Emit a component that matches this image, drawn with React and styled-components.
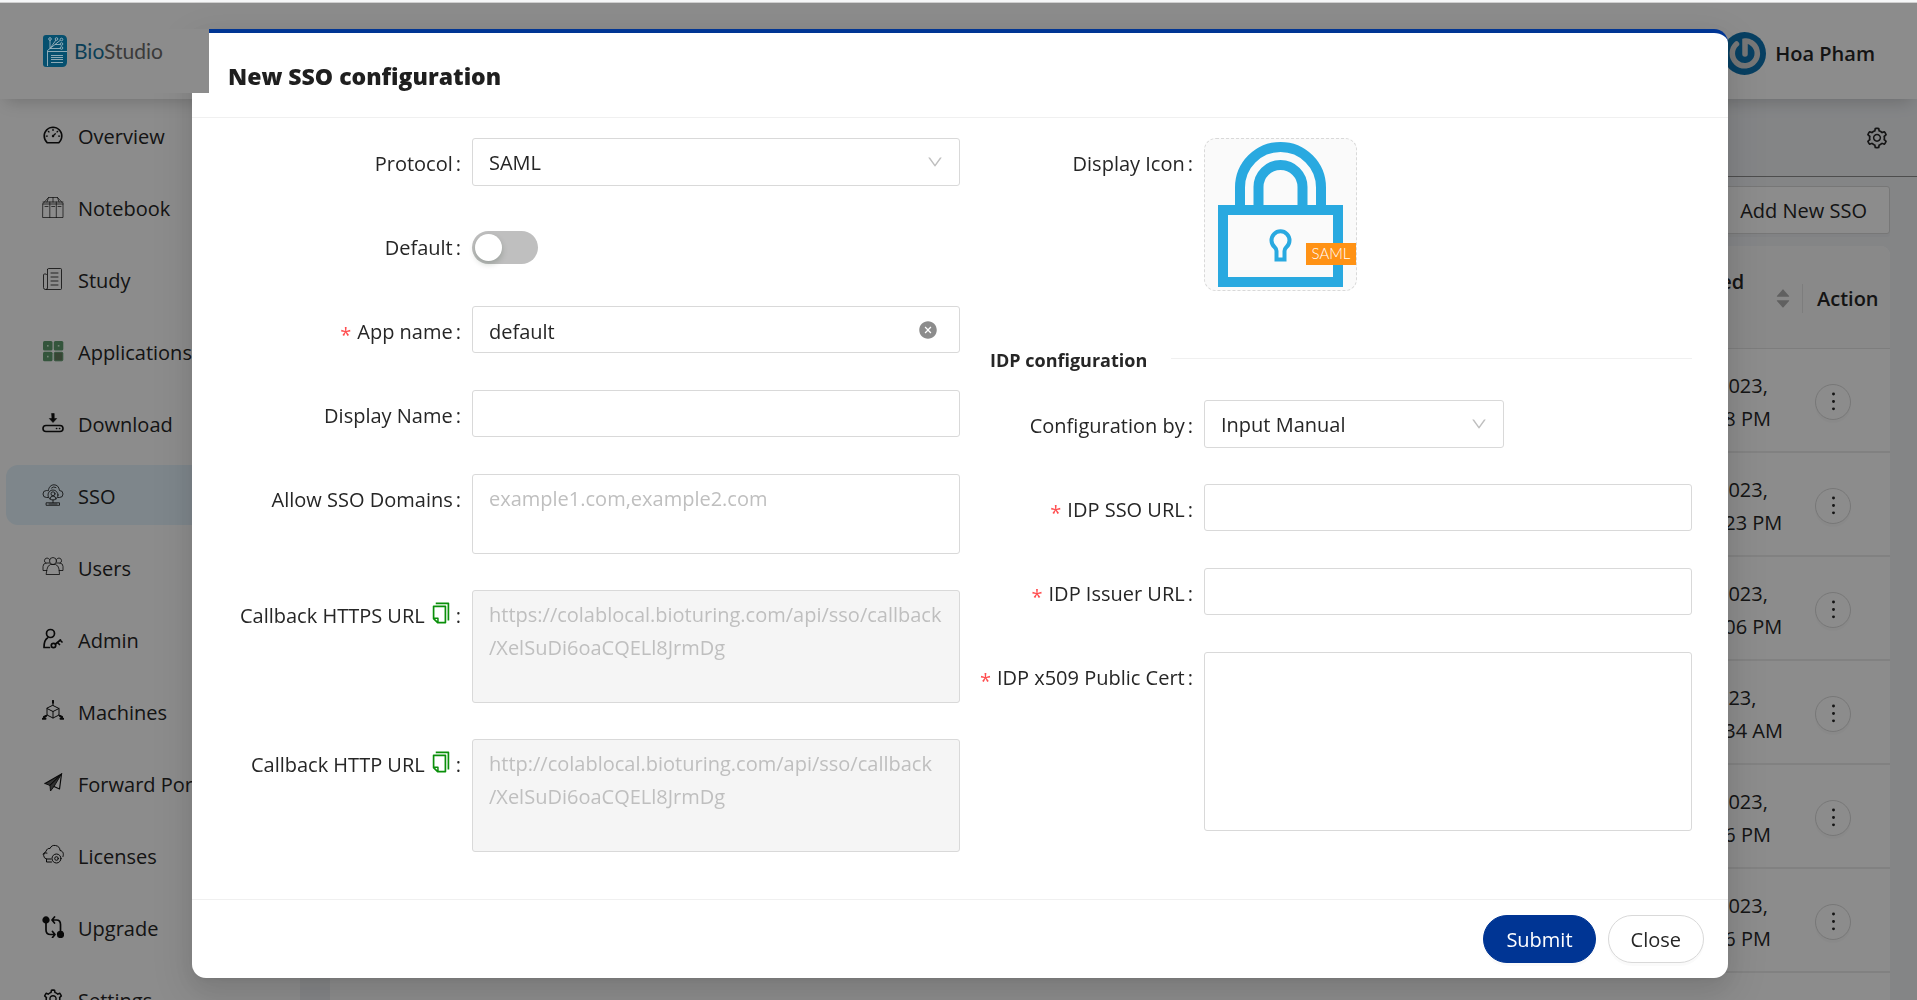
import React, { useState } from 'react'
import styled, { createGlobalStyle, css } from 'styled-components'
import {
  AiFillCaretDown,
  AiFillCaretUp,
  AiFillCloseCircle,
  AiOutlineCopy,
  AiOutlineDashboard,
  AiOutlineDown,
  AiOutlineMore,
  AiOutlineSetting,
} from 'react-icons/ai'

const colors = {
  primary: '#003594',
  text: '#262626',
  border: '#d9d9d9',
  line: '#f0f0f0',
  muted: '#bfbfbf',
  danger: '#ff4d4f',
  sky: '#29a9e0',
  dimmed: '#8c8c8c',
}

const GlobalStyle = createGlobalStyle`
  * { box-sizing: border-box; }
  body {
    margin: 0;
    overflow: hidden;
    color: ${colors.text};
    font-family: "Open Sans", "Noto Sans", sans-serif;
    font-size: 20px;
    line-height: 33px;
  }
  button, input, select, textarea {
    font: inherit;
    color: inherit;
  }
`

/* ---------- page behind the dialog ---------- */

const Page = styled.div`
  display: flex;
  flex-direction: column;
  height: 100vh;
  overflow: hidden;
  border-top: 2px solid #f6f7f8;
  background: #fff;
`

const Header = styled.header`
  position: relative;
  display: flex;
  flex: none;
  justify-content: space-between;
  align-items: center;
  height: 97px;
  padding-right: 42px;
  border-top: 1px solid #d0d0d0;
  background: #fff;
  box-shadow: 0 8px 16px -6px rgba(0, 0, 0, 0.2);
`

// stays above the dialog, so it carries its own dimmed background
const Brand = styled.a`
  position: relative;
  z-index: 20;
  display: flex;
  align-items: center;
  gap: 7px;
  width: 209px;
  height: 64px;
  margin-top: 20px;
  padding: 0 0 20px 43px;
  background: ${colors.dimmed};
  color: #3a3a3a;
  font-family: Lato, sans-serif;
  font-size: 21px;
  line-height: 24px;
  text-decoration: none;
  span { color: #0b3f57; }
`

const User = styled.div`
  display: flex;
  align-items: center;
  gap: 9px;
  margin-bottom: -9px;
  height: 60px;
  padding-bottom: 4px;
  font-weight: 600;
`

const Main = styled.div`
  display: flex;
  flex: 1;
  min-height: 0;
`

const Sidebar = styled.nav`
  display: flex;
  flex: none;
  flex-direction: column;
  gap: 12px;
  width: 300px;
  padding: 6px;
`

const NavLink = styled.a`
  display: flex;
  flex: none;
  align-items: center;
  gap: 14px;
  height: 60px;
  padding: 2px 0 0 36px;
  border-radius: 12px;
  color: ${colors.text};
  text-decoration: none;
  white-space: nowrap;
  background: ${(props) => (props.$active ? '#e5f4fd' : 'transparent')};
  svg {
    flex: none;
    width: 22px;
    height: 22px;
    color: #111;
    margin-bottom: 2px;
  }
`

const Content = styled.main`
  flex: 1;
  min-width: 0;
  background: #f0f2f5;
`

const ContentBar = styled.div`
  display: flex;
  align-items: center;
  justify-content: flex-end;
  height: 78px;
  padding: 0 28px;
  border-bottom: 1px solid #8c8c8c;
`

const IconButton = styled.button`
  display: flex;
  padding: 0;
  border: 0;
  background: none;
  cursor: pointer;
`

const ContentBody = styled.div`
  padding: 9px 27px 0 30px;
`

const Actions = styled.div`
  display: flex;
  justify-content: flex-end;
  margin-bottom: 12px;
`

const Button = styled.button`
  height: 48px;
  padding: 0 22px;
  border: 1px solid ${colors.border};
  border-radius: ${(props) => (props.$round ? '24px' : '3px')};
  background: #fff;
  box-shadow: 0 3px 0 rgba(0, 0, 0, 0.02);
  cursor: pointer;
  ${(props) => props.$primary && css`
    border-color: ${colors.primary};
    background: ${colors.primary};
    color: #fff;
  `}
`

const Table = styled.table`
  width: 100%;
  border-collapse: separate;
  border-spacing: 0;
  border-radius: 9px 9px 0 0;
  overflow: hidden;
  background: #fff;
  th {
    height: 103px;
    padding: 2px 0 0 14px;
    border-bottom: 1px solid #e4e4e4;
    background: #fafafa;
    font-weight: 600;
    text-align: left;
  }
  td {
    height: 104px;
    padding: 3px 0 0 12px;
    border-bottom: 2px solid #ececec;
  }
  th:nth-child(2), td:nth-child(2) {
    width: 135px;
    padding-left: 0;
  }
  th:last-child, td:last-child { width: 87px; }
`

const Sortable = styled.div`
  display: flex;
  align-items: center;
  justify-content: space-between;
  padding-right: 10px;
  border-right: 1px solid #e4e4e4;
  span {
    height: 34px;
    margin: -32px 0 0;
  }
`

const Sorter = styled.i`
  display: flex;
  flex-direction: column;
  color: #b0b0b0;
  svg { width: 18px; height: 18px; }
  svg + svg { margin-top: -7px; }
`

const MoreButton = styled.button`
  display: flex;
  align-items: center;
  justify-content: center;
  width: 36px;
  height: 36px;
  padding: 0;
  border: 1px solid ${colors.border};
  border-radius: 50%;
  background: #fff;
  box-shadow: 0 3px 0 rgba(0, 0, 0, 0.02);
`

/* ---------- dialog ---------- */

const Mask = styled.div`
  position: fixed;
  inset: 3px 0 0;
  z-index: 10;
  display: flex;
  align-items: flex-start;
  padding: 26px 189px 0 192px;
  background: rgba(0, 0, 0, 0.45);
`

const Modal = styled.form`
  flex: 1;
  border-top: 4px solid ${colors.primary};
  border-radius: 14px;
  background: #fff;
  box-shadow: 0 5px 9px -6px rgba(0, 0, 0, 0.12), 0 9px 24px rgba(0, 0, 0, 0.08),
    0 14px 42px 12px rgba(0, 0, 0, 0.08);
`

const ModalHeader = styled.div`
  padding: 27px 36px 24px;
  border-bottom: 1px solid ${colors.line};
  h2 {
    margin: 0;
    color: #1f1f1f;
    font-size: 23px;
    font-weight: 800;
    line-height: 33px;
  }
`

const ModalBody = styled.div`
  display: grid;
  grid-template-columns: 1fr 1fr;
  padding: 20px 36px 11px;
`

const ModalFooter = styled.div`
  display: flex;
  justify-content: flex-end;
  gap: 12px;
  padding: 15px 24px;
  border-top: 1px solid ${colors.line};
`

const Row = styled.div`
  display: grid;
  grid-template-columns: 1fr 2fr;
  align-items: start;
  min-height: 48px;
  margin-bottom: 36px;
`

const Label = styled.label`
  display: flex;
  align-items: center;
  justify-content: flex-end;
  height: 48px;
  padding: 2px 11px 0 0;
  white-space: nowrap;
  &::after {
    content: ":";
    margin-left: 3px;
  }
`

const Required = styled.span`
  height: 26px;
  margin-right: 6px;
  color: ${colors.danger};
`

const CopyButton = styled(IconButton)`
  margin: 0 0 4px 4px;
  color: #0a8f0a;
  svg { width: 24px; height: 24px; }
`

const Control = styled.div`
  position: relative;
  width: ${(props) => props.$width || 'auto'};
`

const field = css`
  display: block;
  width: 100%;
  border: 1px solid ${colors.border};
  border-radius: 3px;
  background: #fff;
  outline: none;
`

const Input = styled.input`
  ${field}
  height: 47px;
  padding: 3px 50px 0 16px;
`

const Select = styled.select`
  ${field}
  height: 48px;
  padding: 0 50px 0 16px;
  appearance: none;
`

const Textarea = styled.textarea`
  ${field}
  height: ${(props) => props.$height};
  padding: 7px 4px 0 16px;
  resize: none;
  overflow: hidden;
  &::placeholder { color: ${colors.muted}; }
  &:disabled {
    background: #f5f5f5;
    color: ${colors.muted};
  }
`

const Chevron = styled(AiOutlineDown)`
  position: absolute;
  top: 15px;
  right: 16px;
  width: 18px;
  height: 18px;
  color: ${colors.muted};
  pointer-events: none;
`

const ClearButton = styled(IconButton)`
  position: absolute;
  top: 14px;
  right: 22px;
  color: #8c8c8c;
  svg { width: 20px; height: 20px; }
`

const Switch = styled.input`
  display: flex;
  align-items: center;
  width: 66px;
  height: 33px;
  margin: 9px 0 0;
  padding: 3px;
  border-radius: 17px;
  background: ${(props) => (props.checked ? colors.primary : colors.muted)};
  appearance: none;
  cursor: pointer;
  &::before {
    content: "";
    width: 27px;
    height: 27px;
    margin-left: ${(props) => (props.checked ? '33px' : '0')};
    border-radius: 50%;
    background: #fff;
    box-shadow: 0 3px 6px rgba(0, 35, 11, 0.2);
  }
`

const IconPicker = styled.button`
  display: block;
  width: 153px;
  height: 153px;
  padding: 0;
  border: 1px dashed ${colors.border};
  border-radius: 12px;
  background: #fafafa;
  cursor: pointer;
  svg { display: block; }
`

const Divider = styled.h3`
  display: flex;
  align-items: center;
  gap: 24px;
  margin: 53px 0 24px;
  padding-left: 30px;
  font-size: 18px;
  font-weight: 700;
  line-height: 32px;
  &::after {
    content: "";
    flex: 1;
    height: 1px;
    margin-bottom: 4px;
    background: ${colors.line};
  }
`

/* ---------- drawings ---------- */

const Line = ({ children, width = 1.2 }) => (
  <svg viewBox="0 0 22 22" fill="none" stroke="currentColor" strokeWidth={width} strokeLinejoin="round" strokeLinecap="round">
    {children}
  </svg>
)

const NotebookIcon = () => (
  <Line width={0.7}>
    <path d="M1 7.5 6.5 1.5h9L21 7.5V21.5H1zM1 6h20M1 8h20M7.8 6v15.5M14.3 6v15.5M6.5 1.5 5 6M11 1.5V6M15.5 1.5 17 6" />
    <path d="M3 10.5h3M9.7 10.5h3M16 10.5h3" />
  </Line>
)

const StudyIcon = () => (
  <Line width={0.8}>
    <path d="M5.5 1.5q0-1 1-1h12q1 0 1 1v19q0 1-1 1h-15q-2 0-2-2V7q0-1 1-1h1.500q.5 0 .5.5M5.500 1.500V20q0 1.500-1.500 1.500" />
    <path d="M9 5h7M9 9h7M9 13h7M9 17h7" />
  </Line>
)

const ApplicationsIcon = () => (
  <svg viewBox="0 0 22 22">
    <g fill="#5f9c6e">
      <rect x="1" y="1" width="9.500" height="9.500" rx="1.500" />
      <rect x="11.800" y="1" width="9.500" height="9.500" rx="1.500" />
      <rect x="1" y="11.800" width="9.500" height="9.500" rx="1.500" />
    </g>
    <rect x="12.300" y="12.300" width="8.500" height="8.500" rx="1" fill="#647f5f" stroke="#5f9c6e" />
    <g fill="#d5efd9">
      <rect x="5" y="5" width="1.600" height="1.600" />
      <rect x="15.800" y="5" width="1.600" height="1.600" />
      <rect x="5" y="15.800" width="1.600" height="1.600" />
    </g>
  </svg>
)

const DownloadIcon = () => (
  <Line width={1.6}>
    <rect x="1" y="13.500" width="20" height="6" rx="3" />
    <path d="M14.500 16.500h.2M17.500 16.500h.2" />
    <path d="M9.800 1.500h2.400v5h2.500L11 10.500 7.300 6.500h2.500z" fill="currentColor" strokeWidth="0.6" />
  </Line>
)

const SsoIcon = () => (
  <Line width={0.8}>
    <path d="M6 13.500H4.500a3.500 3.500 0 0 1 0-7q1 0 1.800.4C6.800 3 9 .8 12 .8s5 2 5.500 5.700a3.500 3.500 0 0 1 0 7H16" />
    <circle cx="11" cy="11" r="5" />
    <circle cx="11" cy="9.800" r="2" />
    <path d="M8 15q.3-3 3-3t3 3M11 16v2.500M9.500 4q2-2 4.500-.5M4.500 18.800h13v2.500h-13zM7 20h8" />
  </Line>
)

const UsersIcon = () => (
  <Line width={0.8}>
    <circle cx="11" cy="5" r="3.500" />
    <path d="M7.500 3.500Q6.500 2 5 2a2.800 2.800 0 0 0-1 5.300M14.500 3.500Q15.500 2 17 2a2.800 2.800 0 0 1 1 5.300" />
    <path d="M4.500 18.500h13L17 13q-.5-3.500-3.500-4.500h-5Q5.500 9.500 5 13zM4.800 14.500H1v-4q0-3 3-3.500h3.500M17.200 14.500H21v-4q0-3-3-3.500h-3.500" />
  </Line>
)

const AdminIcon = () => (
  <Line width={1.700}>
    <circle cx="8.500" cy="5.500" r="4" />
    <path d="M5.500 10Q2 12 2 19.500h5.500" />
    <circle cx="11.500" cy="17.500" r="2.200" />
    <path d="M13.500 16l5-4M15.500 14.500l2 2M18 12l2 2" />
  </Line>
)

const MachinesIcon = () => (
  <Line width={1}>
    <path d="M11 5.500l6 3v6.500l-6 3-6-3V8.500zM5 8.500l6 3 6-3M11 11.500V18M11 5.500V2M5 15l-3.500 3M17 15l3.500 3" />
    <path d="M11 .8v2M.8 18.800h2.700M18.500 18.800h2.700M2 17l2-1M18 16l2 1" strokeWidth="2" />
  </Line>
)

const ForwardIcon = () => (
  <Line width={1.200}>
    <path d="M3 11.500 19.500 2 17.500 17 12 14.500" />
    <path d="M3 11.500 8 13.500 19.500 2M8 13.500 8.500 19 12 14.500 19.500 2z" fill="currentColor" fillOpacity="0.700" strokeWidth="0.900" />
  </Line>
)

const LicensesIcon = () => (
  <Line width={1}>
    <path d="M9 15H4.500A4 4 0 0 1 4 7.500C4.500 5 6.500 4 8 4.500 9 2 11 1 13.500 1.500c3 .5 4.500 2.500 4.500 5 3 .5 4 3 3 6" />
    <path d="M1 10q2-2 4-1M4.500 15v3h5" />
    <circle cx="14.500" cy="14.500" r="4.500" />
    <circle cx="14.500" cy="14.500" r="1.800" />
  </Line>
)

const UpgradeIcon = () => (
  <Line width={1.700}>
    <circle cx="4" cy="4" r="2.800" fill="currentColor" />
    <circle cx="18.500" cy="18.500" r="2.800" fill="currentColor" />
    <path d="M4 5v9q0 4.500 4.500 4.500h4M10.500 15.500l2.500 3-2.500 3M18.500 17V8.500Q18.500 4 14.500 4h-4M12.500 1 10 4l2.500 3" />
  </Line>
)

const BrandMark = () => (
  <svg width="24" height="32" viewBox="0 0 24 32" fill="none" stroke="#9db4be" strokeWidth="0.9">
    <path d="M3 0h16q5 0 5 5v22q0 5-5 5H3q-3 0-3-3V3q0-3 3-3z" fill="#06506f" stroke="none" />
    <path d="M4.500 31V15.500L7 13.500V5M7 13.500 13 5M7 13.500l5-4 5-4M12 9.500h5M7 13.500h10M4.500 16.500H24" />
    <circle cx="7" cy="4" r="1.300" />
    <circle cx="13.500" cy="4" r="1.300" />
    <circle cx="18.500" cy="4.500" r="1.300" />
    <circle cx="18.500" cy="9" r="1.300" />
    <circle cx="18.500" cy="13" r="1.300" />
    <path d="M8 20.500h12M8 22.500h12M8 24.500h12M8 27.500h12" />
  </svg>
)

const Avatar = () => (
  <svg width="43" height="43" viewBox="0 0 43 43">
    <circle cx="21.500" cy="21.500" r="21.500" fill="#0d74b2" />
    <path d="M13.500 12a12.500 12.500 0 1 0 14.500-1.500q-3-2-6-1.500v13" fill="none" stroke="#d9d9d9" strokeWidth="5.500" strokeLinecap="round" />
  </svg>
)

const LockIcon = () => (
  <svg width="151" height="151" viewBox="1 1 151 151" fill="none" stroke={colors.sky} strokeWidth="10">
    <path d="M36 70V49.500a40.500 40.500 0 0 1 81 0V70" />
    <path d="M54.500 70V49a22 22 0 0 1 44 0V70" />
    <rect x="19" y="72" width="115" height="72" />
    <path d="M72.500 121.500V113q0-2-2-4a9 9 0 1 1 12 0q-2 2-2 4v8.500z" strokeWidth="4" />
    <rect x="102" y="105" width="50" height="22" fill="#ff9215" stroke="none" />
    <text x="127" y="121" textAnchor="middle" fill="#fff" stroke="none" fontFamily="Lato, sans-serif" fontWeight="300" fontSize="15">SAML</text>
  </svg>
)

/* ---------- data ---------- */

const navItems = [
  ['Overview', AiOutlineDashboard],
  ['Notebook', NotebookIcon],
  ['Study', StudyIcon],
  ['Applications', ApplicationsIcon],
  ['Download', DownloadIcon],
  ['SSO', SsoIcon],
  ['Users', UsersIcon],
  ['Admin', AdminIcon],
  ['Machines', MachinesIcon],
  ['Forward Port', ForwardIcon],
  ['Licenses', LicensesIcon],
  ['Upgrade', UpgradeIcon],
  ['Settings', AiOutlineSetting],
]

const created = [
  ['6/21/2023,', '2:14:38 PM'],
  ['6/20/2023,', '12:41:23 PM'],
  ['6/15/2023,', '12:30:06 PM'],
  ['6/9/2023,', '10:22:34 AM'],
  ['5/30/2023,', '5:47:16 PM'],
  ['5/29/2023,', '3:05:26 PM'],
  ['5/26/2023,', '4:18:02 PM'],
]

const Field = ({ id, label, required, extra, children }) => (
  <Row>
    <Label htmlFor={id}>
      {required && <Required>*</Required>}
      {label}
      {extra}
    </Label>
    {children}
  </Row>
)

const Copy = ({ label }) => (
  <CopyButton type="button" aria-label={label}><AiOutlineCopy /></CopyButton>
)

const Dashboard = () => (
  <Page>
    <Header>
      <Brand href="#">
        <BrandMark />
        <div><span>Bio</span>Studio</div>
      </Brand>
      <User><Avatar />Hoa Pham</User>
    </Header>
    <Main>
      <Sidebar>
        {navItems.map(([name, Icon]) => (
          <NavLink key={name} href="#" $active={name === 'SSO'}>
            <Icon />
            {name}
          </NavLink>
        ))}
      </Sidebar>
      <Content>
        <ContentBar>
          <IconButton aria-label="Settings"><AiOutlineSetting size={24} /></IconButton>
        </ContentBar>
        <ContentBody>
          <Actions><Button>Add New SSO</Button></Actions>
          <Table>
            <thead>
              <tr>
                <th />
                <th>
                  <Sortable>
                    <span>Created</span>
                    <Sorter><AiFillCaretUp /><AiFillCaretDown /></Sorter>
                  </Sortable>
                </th>
                <th>Action</th>
              </tr>
            </thead>
            <tbody>
              {created.map(([date, time]) => (
                <tr key={date}>
                  <td />
                  <td>{date}<br />{time}</td>
                  <td>
                    <MoreButton aria-label="More"><AiOutlineMore size={27} /></MoreButton>
                  </td>
                </tr>
              ))}
            </tbody>
          </Table>
        </ContentBody>
      </Content>
    </Main>
  </Page>
)

const SsoDialog = () => {
  const [isDefault, setIsDefault] = useState(false)
  const [appName, setAppName] = useState('default')

  return (
    <Mask>
      <Modal role="dialog" aria-labelledby="dialog-title" onSubmit={(e) => e.preventDefault()}>
        <ModalHeader><h2 id="dialog-title">New SSO configuration</h2></ModalHeader>
        <ModalBody>
          <div>
            <Field id="protocol" label="Protocol">
              <Control>
                <Select id="protocol"><option>SAML</option></Select>
                <Chevron />
              </Control>
            </Field>
            <Field id="default" label="Default">
              <Switch id="default" type="checkbox" checked={isDefault} onChange={(e) => setIsDefault(e.target.checked)} />
            </Field>
            <Field id="app-name" label="App name" required>
              <Control>
                <Input id="app-name" value={appName} onChange={(e) => setAppName(e.target.value)} />
                <ClearButton type="button" aria-label="Clear" onClick={() => setAppName('')}>
                  <AiFillCloseCircle />
                </ClearButton>
              </Control>
            </Field>
            <Field id="display-name" label="Display Name">
              <Input id="display-name" />
            </Field>
            <Field id="domains" label="Allow SSO Domains">
              <Textarea id="domains" $height="80px" placeholder="example1.com,example2.com" />
            </Field>
            <Field id="https-url" label="Callback HTTPS URL" extra={<Copy label="Copy HTTPS URL" />}>
              <Textarea id="https-url" $height="113px" disabled value={'https://colablocal.bioturing.com/api/sso/callback\n/XelSuDi6oaCQELl8JrmDg'} />
            </Field>
            <Field id="http-url" label="Callback HTTP URL" extra={<Copy label="Copy HTTP URL" />}>
              <Textarea id="http-url" $height="113px" disabled value={'http://colablocal.bioturing.com/api/sso/callback\n/XelSuDi6oaCQELl8JrmDg'} />
            </Field>
          </div>
          <div>
            <Field id="display-icon" label="Display Icon">
              <IconPicker id="display-icon" type="button"><LockIcon /></IconPicker>
            </Field>
            <Divider>IDP configuration</Divider>
            <Field id="config-by" label="Configuration by">
              <Control $width="300px">
                <Select id="config-by"><option>Input Manual</option></Select>
                <Chevron />
              </Control>
            </Field>
            <Field id="idp-sso" label="IDP SSO URL" required>
              <Input id="idp-sso" />
            </Field>
            <Field id="idp-issuer" label="IDP Issuer URL" required>
              <Input id="idp-issuer" />
            </Field>
            <Field id="idp-cert" label="IDP x509 Public Cert" required>
              <Textarea id="idp-cert" $height="179px" />
            </Field>
          </div>
        </ModalBody>
        <ModalFooter>
          <Button type="submit" $primary $round>Submit</Button>
          <Button type="button" $round>Close</Button>
        </ModalFooter>
      </Modal>
    </Mask>
  )
}

const App = () => (
  <>
    <GlobalStyle />
    <Dashboard />
    <SsoDialog />
  </>
)

export default App
